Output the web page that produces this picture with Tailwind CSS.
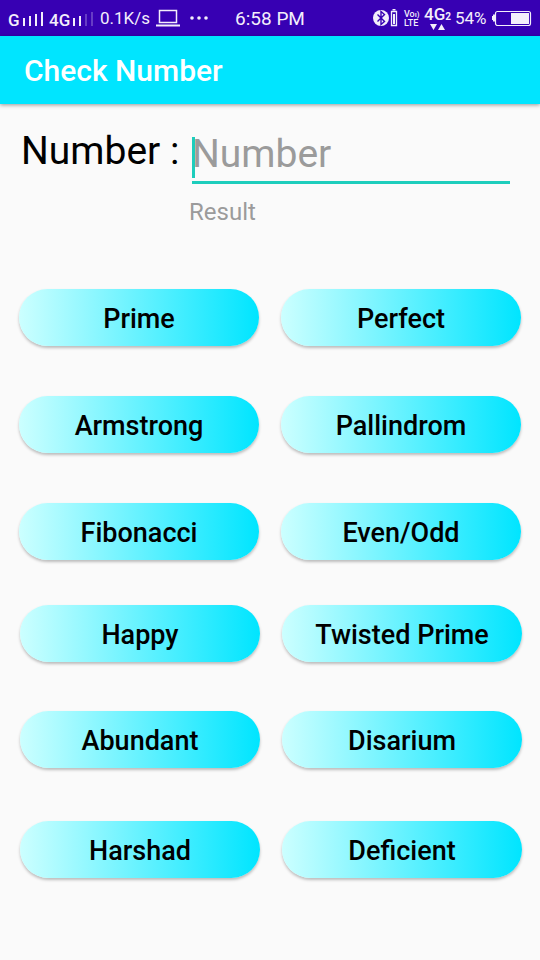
<!DOCTYPE html>
<html lang="en">
<head>
<meta charset="utf-8">
<meta name="viewport" content="width=device-width, initial-scale=1">
<title>Check Number</title>
<script src="https://cdn.jsdelivr.net/npm/@tailwindcss/browser@4"></script>
</head>
<body class="min-h-screen bg-[#fafafa] font-[Roboto,sans-serif] text-black">
<div class="flex h-9 items-center bg-[#3700b3] px-2 text-[#f3eefb]">
  <div class="flex flex-1 items-center">
    <span class="w-3 pt-1 text-[17px] leading-5 font-medium">G</span>
    <svg class="ml-[3px] h-4 w-[21px]" viewBox="0 0 21 16" fill="currentColor" aria-hidden="true"><path d="M0 8h2v8H0zM6 6h2v10H6zM12 4h2v12h-2zM18 2h2v14h-2z"/></svg>
    <span class="ml-[5px] w-[21px] pt-1 text-[17px] leading-5 font-medium">4G</span>
    <svg class="ml-[3px] h-4 w-[21px]" viewBox="0 0 21 16" fill="currentColor" aria-hidden="true"><path d="M0 8h2v8H0zM6 6h2v10H6z"/><path opacity=".25" d="M12 4h2v12h-2zM18 2h2v14h-2z"/></svg>
    <span class="ml-[6px] w-[52px] text-[17px] leading-5 whitespace-nowrap">0.1K/s</span>
    <svg class="ml-1 h-[18px] w-6" viewBox="0 0 24 18" fill="none" stroke="currentColor" aria-hidden="true"><path stroke-width="1.5" d="M3.5 1.5h17v12h-17z"/><path stroke-width="2" d="M0 16.5h24"/></svg>
    <svg class="ml-[10px] h-4 w-[18px]" viewBox="0 0 18 16" fill="currentColor" aria-hidden="true"><circle cx="2" cy="8" r="1.8"/><circle cx="9" cy="8" r="1.8"/><circle cx="16" cy="8" r="1.8"/></svg>
  </div>
  <span class="pt-px text-[19px] leading-5">6:58 PM</span>
  <div class="flex flex-1 items-center justify-end">
    <svg class="h-[18px] w-[25px]" viewBox="0 0 25 18" aria-hidden="true"><circle cx="8" cy="9" r="8" fill="currentColor"/><path d="M4.500 5.500l7 7L8 15.500V2.500l3.500 3-7 7" fill="none" stroke="#3700b3" stroke-width="1.400"/><path d="M18.500 2.500h5v14h-5z" fill="none" stroke="currentColor" stroke-width="1.300"/><path d="M19.500 0h3v1.500h-3zM20 5h2v10h-2z" fill="currentColor"/></svg>
    <span class="ml-[6px] flex w-[17px] flex-col pt-px text-[9px] leading-[9px] font-medium"><span class="whitespace-nowrap">Vo<span class="text-[8px]">ı)</span></span><span>LTE</span></span>
    <span class="ml-[3px] flex w-[27px] flex-col items-center">
      <span class="text-[17px] leading-[15px] font-medium">4G<span class="text-[10px] font-bold">2</span></span>
      <svg class="h-[6px] w-[15px]" viewBox="0 0 15 6" fill="currentColor" aria-hidden="true"><path d="M0 0h7L3.500 6zM8 6h7L11.500 0z"/></svg>
    </span>
    <span class="ml-[4px] w-8 text-[17px] leading-5">54%</span>
    <svg class="ml-[5px] h-4 w-[40px]" viewBox="0 0 40 16" aria-hidden="true"><path d="M0 6h1V4.500h2v7H1V10H0z" fill="currentColor"/><rect x="3.500" y="1.500" width="35" height="14" rx="2" fill="none" stroke="currentColor" stroke-width="1.200"/><path d="M19 3h18v11H19z" fill="currentColor"/></svg>
  </div>
</div>
<header class="flex h-[68px] items-center bg-[#00e5ff] px-6 pt-px shadow-[0_1px_4px_rgba(0,0,0,0.4)]">
  <h1 class="text-[30px] leading-9 font-medium text-white">Check Number</h1>
</header>
<main class="pb-12">
  <div class="flex items-start pt-6 pr-[30px] pl-[21px]">
    <label for="number" class="w-[171px] shrink-0 text-[39px] leading-[46px]">Number :</label>
    <div class="relative min-w-0 grow border-b-[3px] border-[#1dcdbc] pt-[3px] pb-1">
      <input id="number" type="text" inputmode="numeric" placeholder="Number" class="block h-[46px] w-full bg-transparent text-[39px] leading-[46px] caret-[#1dcdbc] outline-none placeholder:text-[#9b9b9b]">
      <span class="absolute top-[9px] left-0 h-[41px] w-[3px] bg-[#1dcdbc]"></span>
    </div>
  </div>
  <output for="number" class="ml-[189px] block pt-3 text-2xl leading-8 text-[#9b9b9b]">Result</output>
  <div class="mt-[61px] grid grid-cols-2 gap-x-[22px] gap-y-[50px] px-[19px] text-[27px] leading-8 font-medium">
    <button type="button" class="h-[57px] rounded-full bg-linear-to-r/srgb from-[#ccffff] to-[#00e5ff] pt-[2px] shadow-[0_2px_3px_rgba(0,0,0,0.25)]">Prime</button>
    <button type="button" class="h-[57px] rounded-full bg-linear-to-r/srgb from-[#ccffff] to-[#00e5ff] pt-[2px] shadow-[0_2px_3px_rgba(0,0,0,0.25)]">Perfect</button>
    <button type="button" class="h-[57px] rounded-full bg-linear-to-r/srgb from-[#ccffff] to-[#00e5ff] pt-[2px] shadow-[0_2px_3px_rgba(0,0,0,0.25)]">Armstrong</button>
    <button type="button" class="h-[57px] rounded-full bg-linear-to-r/srgb from-[#ccffff] to-[#00e5ff] pt-[2px] shadow-[0_2px_3px_rgba(0,0,0,0.25)]">Pallindrom</button>
    <button type="button" class="h-[57px] rounded-full bg-linear-to-r/srgb from-[#ccffff] to-[#00e5ff] pt-[2px] shadow-[0_2px_3px_rgba(0,0,0,0.25)]">Fibonacci</button>
    <button type="button" class="h-[57px] rounded-full bg-linear-to-r/srgb from-[#ccffff] to-[#00e5ff] pt-[2px] shadow-[0_2px_3px_rgba(0,0,0,0.25)]">Even/Odd</button>
  </div>
  <div class="mt-[45px] grid grid-cols-2 gap-x-[22px] gap-y-[49px] pr-[18px] pl-5 text-[27px] leading-8 font-medium">
    <button type="button" class="h-[57px] rounded-full bg-linear-to-r/srgb from-[#ccffff] to-[#00e5ff] pt-[2px] shadow-[0_2px_3px_rgba(0,0,0,0.25)]">Happy</button>
    <button type="button" class="h-[57px] rounded-full bg-linear-to-r/srgb from-[#ccffff] to-[#00e5ff] pt-[2px] shadow-[0_2px_3px_rgba(0,0,0,0.25)]">Twisted Prime</button>
    <button type="button" class="h-[57px] rounded-full bg-linear-to-r/srgb from-[#ccffff] to-[#00e5ff] pt-[2px] shadow-[0_2px_3px_rgba(0,0,0,0.25)]">Abundant</button>
    <button type="button" class="h-[57px] rounded-full bg-linear-to-r/srgb from-[#ccffff] to-[#00e5ff] pt-[2px] shadow-[0_2px_3px_rgba(0,0,0,0.25)]">Disarium</button>
  </div>
  <div class="mt-[53px] grid grid-cols-2 gap-x-[22px] pr-[18px] pl-5 text-[27px] leading-8 font-medium">
    <button type="button" class="h-[57px] rounded-full bg-linear-to-r/srgb from-[#ccffff] to-[#00e5ff] pt-[2px] shadow-[0_2px_3px_rgba(0,0,0,0.25)]">Harshad</button>
    <button type="button" class="h-[57px] rounded-full bg-linear-to-r/srgb from-[#ccffff] to-[#00e5ff] pt-[2px] shadow-[0_2px_3px_rgba(0,0,0,0.25)]">Deficient</button>
  </div>
</main>
</body>
</html>
